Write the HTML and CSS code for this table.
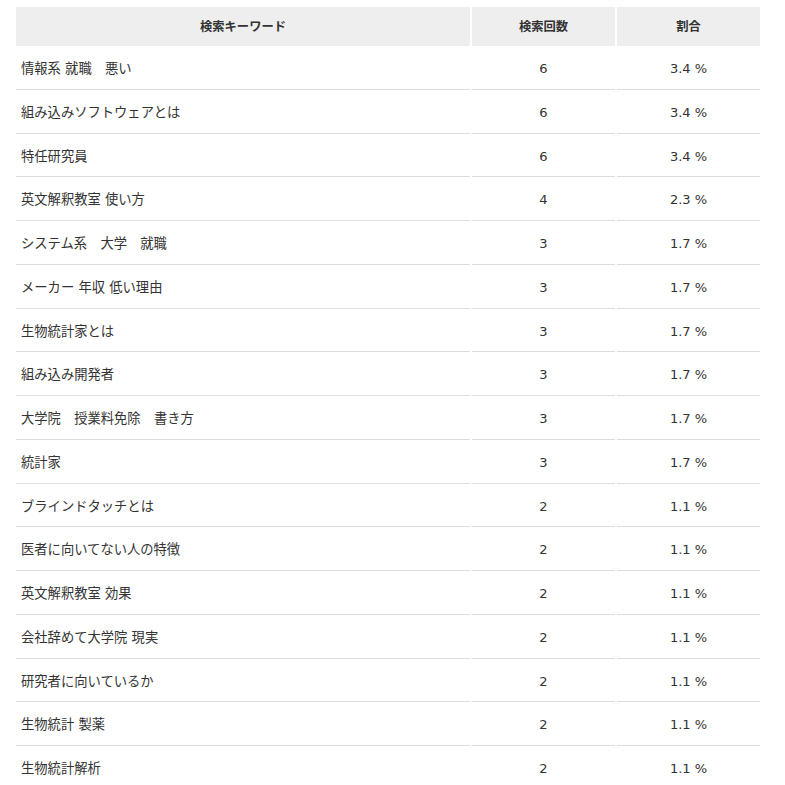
FILE: index.html
```html
<!DOCTYPE html>
<html lang="ja">
<head>
<meta charset="utf-8">
<link rel="stylesheet" href="styles.css">
</head>
<body>
<div class="wrap">
<table class="kw">
<colgroup><col class="c1"><col class="c2"><col class="c3"></colgroup>
<thead>
<tr><th>検索キーワード</th><th>検索回数</th><th>割合</th></tr>
</thead>
<tbody>
<tr><td>情報系 就職　悪い</td><td class="n">6</td><td class="n">3.4 %</td></tr>
<tr><td>組み込みソフトウェアとは</td><td class="n">6</td><td class="n">3.4 %</td></tr>
<tr><td>特任研究員</td><td class="n">6</td><td class="n">3.4 %</td></tr>
<tr><td>英文解釈教室 使い方</td><td class="n">4</td><td class="n">2.3 %</td></tr>
<tr><td>システム系　大学　就職</td><td class="n">3</td><td class="n">1.7 %</td></tr>
<tr><td>メーカー 年収 低い理由</td><td class="n">3</td><td class="n">1.7 %</td></tr>
<tr><td>生物統計家とは</td><td class="n">3</td><td class="n">1.7 %</td></tr>
<tr><td>組み込み開発者</td><td class="n">3</td><td class="n">1.7 %</td></tr>
<tr><td>大学院　授業料免除　書き方</td><td class="n">3</td><td class="n">1.7 %</td></tr>
<tr><td>統計家</td><td class="n">3</td><td class="n">1.7 %</td></tr>
<tr><td>ブラインドタッチとは</td><td class="n">2</td><td class="n">1.1 %</td></tr>
<tr><td>医者に向いてない人の特徴</td><td class="n">2</td><td class="n">1.1 %</td></tr>
<tr><td>英文解釈教室 効果</td><td class="n">2</td><td class="n">1.1 %</td></tr>
<tr><td>会社辞めて大学院 現実</td><td class="n">2</td><td class="n">1.1 %</td></tr>
<tr><td>研究者に向いているか</td><td class="n">2</td><td class="n">1.1 %</td></tr>
<tr><td>生物統計 製薬</td><td class="n">2</td><td class="n">1.1 %</td></tr>
<tr><td>生物統計解析</td><td class="n">2</td><td class="n">1.1 %</td></tr>
</tbody>
</table>
</div>
</body>
</html>
```

FILE: styles.css
```css
html, body {
  margin: 0;
  padding: 0;
  background: #fff;
}
body {
  font-family: "DejaVu Sans", "Noto Sans CJK JP", sans-serif;
  color: #333;
}
.wrap {
  padding: 7px 0 0 14px;
}
.kw {
  width: 748px;
  border-collapse: separate;
  border-spacing: 2px 0;
  table-layout: fixed;
}
.c1 { width: 454px; }
.c2 { width: 143px; }
.c3 { width: 143px; }
.kw th {
  background: #eee;
  font-family: "Noto Sans CJK JP", sans-serif;
  font-size: 12.3px;
  font-weight: bold;
  line-height: 21px;
  padding: 9px 5px;
  text-align: center;
  color: #333;
}
.kw td {
  font-size: 13.3px;
  line-height: 22.75px;
  padding: 12px 5px 8px;
  border-bottom: 1px solid #ddd;
  text-align: left;
  white-space: pre;
}
.kw td.n {
  text-align: center;
  font-size: 13px;
}
```
